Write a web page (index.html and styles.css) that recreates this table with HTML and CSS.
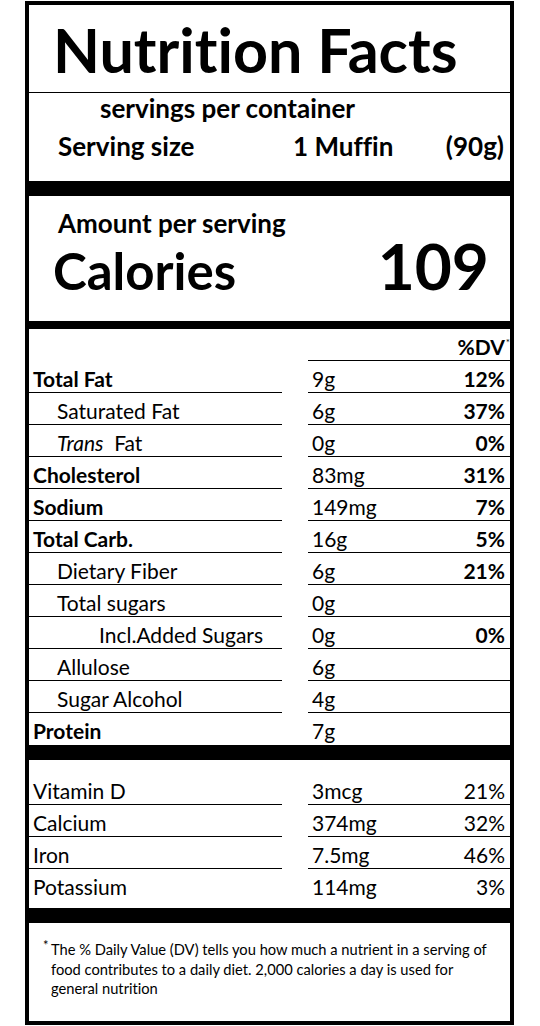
FILE: index.html
```html
<!DOCTYPE html>
<html lang="en">
  <head>
    <meta charset="UTF-8" />
    <meta name="viewport" content="width=device-width, initial-scale=1.0" />
    <title>Nutrition Facts</title>
    <link rel="stylesheet" href="styles.css">
  </head>
  <body>
    <div class="label">
      <div class="title">Nutrition Facts</div>

      <div class="serving">
        <div class="servings-count">servings per container</div>
        <div class="serving-size">
          <span class="size-name">Serving size</span>
          <span class="size-unit">1 Muffin</span>
          <span class="size-grams">(90g)</span>
        </div>
      </div>

      <div class="bar bar-thick"></div>

      <div class="calories">
        <div class="amount">Amount per serving</div>
        <div class="calories-row">
          <span class="calories-name">Calories</span>
          <span class="calories-value">109</span>
        </div>
      </div>

      <div class="bar bar-mid"></div>

      <div class="nutrients">
        <div class="row header">
          <div class="cell-name"></div>
          <div class="cell-value">
            <span class="dv">%DV<sup>*</sup></span>
          </div>
        </div>
        <div class="row">
          <div class="cell-name strong">Total Fat</div>
          <div class="cell-value"><span>9g</span><span class="dv">12%</span></div>
        </div>
        <div class="row">
          <div class="cell-name indent">Saturated Fat</div>
          <div class="cell-value"><span>6g</span><span class="dv">37%</span></div>
        </div>
        <div class="row">
          <div class="cell-name indent"><i>Trans</i>&nbsp; Fat</div>
          <div class="cell-value"><span>0g</span><span class="dv">0%</span></div>
        </div>
        <div class="row">
          <div class="cell-name strong">Cholesterol</div>
          <div class="cell-value"><span>83mg</span><span class="dv">31%</span></div>
        </div>
        <div class="row">
          <div class="cell-name strong">Sodium</div>
          <div class="cell-value"><span>149mg</span><span class="dv">7%</span></div>
        </div>
        <div class="row">
          <div class="cell-name strong">Total Carb.</div>
          <div class="cell-value"><span>16g</span><span class="dv">5%</span></div>
        </div>
        <div class="row">
          <div class="cell-name indent">Dietary Fiber</div>
          <div class="cell-value"><span>6g</span><span class="dv">21%</span></div>
        </div>
        <div class="row">
          <div class="cell-name indent">Total sugars</div>
          <div class="cell-value"><span>0g</span></div>
        </div>
        <div class="row">
          <div class="cell-name indent-2">Incl.Added Sugars</div>
          <div class="cell-value"><span>0g</span><span class="dv">0%</span></div>
        </div>
        <div class="row">
          <div class="cell-name indent">Allulose</div>
          <div class="cell-value"><span>6g</span></div>
        </div>
        <div class="row">
          <div class="cell-name indent">Sugar Alcohol</div>
          <div class="cell-value"><span>4g</span></div>
        </div>
        <div class="row last">
          <div class="cell-name strong">Protein</div>
          <div class="cell-value"><span>7g</span></div>
        </div>
      </div>

      <div class="bar bar-thick"></div>

      <div class="vitamins">
        <div class="row">
          <div class="cell-name">Vitamin D</div>
          <div class="cell-value"><span>3mcg</span><span class="dv">21%</span></div>
        </div>
        <div class="row">
          <div class="cell-name">Calcium</div>
          <div class="cell-value"><span>374mg</span><span class="dv">32%</span></div>
        </div>
        <div class="row">
          <div class="cell-name">Iron</div>
          <div class="cell-value"><span>7.5mg</span><span class="dv">46%</span></div>
        </div>
        <div class="row last">
          <div class="cell-name">Potassium</div>
          <div class="cell-value"><span>114mg</span><span class="dv">3%</span></div>
        </div>
      </div>

      <div class="bar bar-thick"></div>

      <p class="footnote">
        <sup>*</sup>The % Daily Value (DV) tells you how much a nutrient in a serving of<br>
        food contributes to a daily diet. 2,000 calories a day is used for<br>
        general nutrition
      </p>
    </div>
  </body>
</html>
```

FILE: styles.css
```css
body {
  margin: 0;
  padding: 1px 0 0 25px;
  background: #fff;
  color: #000;
  font-family: Lato, "Liberation Sans", sans-serif;
  font-variant-ligatures: none;
}

.label {
  box-sizing: border-box;
  width: 489px;
  height: 1024px;
  border: 4px solid #000;
  display: flex;
  flex-direction: column;
}

.title {
  box-sizing: border-box;
  height: 88px;
  border-bottom: 1px solid #000;
  padding: 3px 0 0 24px;
  font-size: 61px;
  font-weight: 700;
  line-height: 84px;
}

.serving {
  height: 88px;
  font-weight: 700;
  font-size: 26px;
  line-height: 30px;
}

.servings-count {
  padding-left: 71px;
}

.serving-size {
  display: flex;
  padding: 8px 6px 0 29px;
}

.size-name {
  width: 235px;
}

.size-unit {
  flex: 1;
}

.bar {
  background: #000;
  flex: none;
}

.bar-thick {
  height: 15px;
}

.bar-mid {
  height: 8px;
}

.calories {
  height: 125px;
  font-weight: 700;
}

.amount {
  padding: 12px 0 0 29px;
  font-size: 26px;
  line-height: 30px;
}

.calories-row {
  display: flex;
  justify-content: space-between;
  align-items: baseline;
  margin-top: -2px;
  padding: 0 21px 0 24px;
}

.calories-name {
  font-size: 51px;
  line-height: 60px;
}

.calories-value {
  font-size: 64px;
  line-height: 60px;
}

.row {
  display: flex;
  height: 32px;
  font-size: 21px;
  line-height: 22px;
}

.cell-name,
.cell-value {
  box-sizing: border-box;
  border-bottom: 1px solid #000;
  padding-top: 7px;
}

.cell-name {
  width: 253px;
  padding-left: 4px;
}

.cell-value {
  display: flex;
  justify-content: space-between;
  width: 202px;
  margin-left: 26px;
  padding-left: 4px;
  padding-right: 5px;
}

.row.last .cell-name,
.row.last .cell-value {
  border-bottom: none;
}

.header .cell-name {
  border-bottom: none;
}

.header .cell-value {
  justify-content: flex-end;
}

.strong {
  font-weight: 700;
}

.indent {
  padding-left: 28px;
}

.indent-2 {
  padding-left: 70px;
}

.nutrients .dv {
  font-weight: 700;
}

.dv sup {
  font-size: 10px;
  font-weight: 400;
  vertical-align: 9px;
  line-height: 0;
  margin-left: 1px;
  margin-right: -5px;
}

.vitamins {
  padding: 13px 0 7px;
}

.footnote {
  margin: 0;
  padding: 17px 2px 0 22px;
  font-size: 14.7px;
  line-height: 19.5px;
  white-space: nowrap;
}

.footnote sup {
  display: inline-block;
  width: 8px;
  margin-left: -8px;
  font-size: 13px;
  line-height: 0;
  vertical-align: 5px;
}
```
